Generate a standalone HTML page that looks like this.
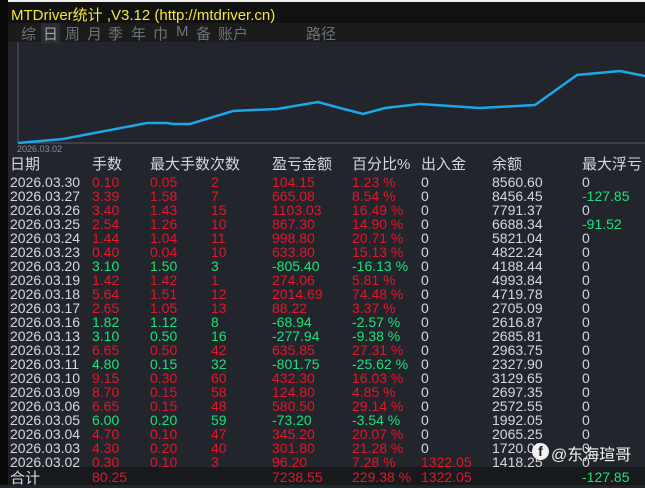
<!DOCTYPE html>
<html><head><meta charset="utf-8"><style>
body{margin:0;width:645px;height:485px;overflow:hidden;background:#22252b;font-family:"Liberation Sans","Noto Sans CJK SC",sans-serif;position:relative}
.a{position:absolute;white-space:nowrap}
#left{left:0;top:0;width:8px;height:485px;background:#0a0a0a}
#title{left:8px;top:0;width:637px;height:23px;background:#111;border-top:2px solid #eee;box-sizing:border-box}
#title span{position:absolute;left:3px;top:2px;color:#f5e63a;font-size:15px}
#tabs{left:8px;top:23px;width:637px;height:19px;background:#1b1b1b;color:#6e7278;font-size:15px}
.r{font-size:14px;line-height:14px}
.h{font-size:15px;line-height:16px;color:#d4d7e0;top:157px}
.w{color:#d4d7e0}.rd{color:#e0182a}.g{color:#1ee07a}
#tot{left:8px;top:467px;width:637px;height:18px;background:#18191c}
</style></head><body>
<div class="a" id="left"></div>
<div class="a" id="title"><span>MTDriver统计 ,V3.12 (http://mtdriver.cn)</span></div>
<div class="a" id="tabs">
<span class="a" style="left:13px;top:0">综</span>
<span class="a" style="left:33px;top:0;background:#2a2d33;color:#a0a4aa;padding:0 2px">日</span>
<span class="a" style="left:57px;top:0">周</span>
<span class="a" style="left:79px;top:0">月</span>
<span class="a" style="left:100px;top:0">季</span>
<span class="a" style="left:123px;top:0">年</span>
<span class="a" style="left:145px;top:0">巾</span>
<span class="a" style="left:168px;top:0">M</span>
<span class="a" style="left:188px;top:0">备</span>
<span class="a" style="left:210px;top:0">账户</span>
<span class="a" style="left:298px;top:0">路径</span>
</div>
<svg class="a" style="left:0;top:42px" width="645" height="110">
<line x1="18" y1="0" x2="18" y2="101" stroke="#555a62"/>
<line x1="18" y1="101" x2="645" y2="101" stroke="#555a62"/>
<polyline fill="none" stroke="#1aa8e8" stroke-width="2.5" points="18,101 63,97 147,81 167,81 173,82 190,82 233,69 253,68 277,67 318,60 340,66 363,72 385,66 420,62 480,66 535,63 577,33 620,29 645,34"/>
<text x="17" y="110" font-size="9" fill="#8a8e96" font-family="Liberation Sans">2026.03.02</text>
</svg>
<div class="a h" style="left:10px">日期</div>
<div class="a h" style="left:92px">手数</div>
<div class="a h" style="left:150px">最大手数次数</div>
<div class="a h" style="left:272px">盈亏金额</div>
<div class="a h" style="left:352px">百分比%</div>
<div class="a h" style="left:421px">出入金</div>
<div class="a h" style="left:492px">余额</div>
<div class="a h" style="left:582px">最大浮亏</div>
<div class="a" id="tot"></div>
<div id="rows"></div>
<script>
var d=[["2026.03.30","0.10","0.05","2","104.15","1.23 %","0","8560.60","0",0,0],
["2026.03.27","3.39","1.58","7","665.08","8.54 %","0","8456.45","-127.85",0,1],
["2026.03.26","3.40","1.43","15","1103.03","16.49 %","0","7791.37","0",0,0],
["2026.03.25","2.54","1.26","10","867.30","14.90 %","0","6688.34","-91.52",0,1],
["2026.03.24","1.44","1.04","11","998.80","20.71 %","0","5821.04","0",0,0],
["2026.03.23","0.40","0.04","10","633.80","15.13 %","0","4822.24","0",0,0],
["2026.03.20","3.10","1.50","3","-805.40","-16.13 %","0","4188.44","0",1,0],
["2026.03.19","1.42","1.42","1","274.06","5.81 %","0","4993.84","0",0,0],
["2026.03.18","5.64","1.51","12","2014.69","74.48 %","0","4719.78","0",0,0],
["2026.03.17","2.65","1.05","13","88.22","3.37 %","0","2705.09","0",0,0],
["2026.03.16","1.82","1.12","8","-68.94","-2.57 %","0","2616.87","0",1,0],
["2026.03.13","3.10","0.50","16","-277.94","-9.38 %","0","2685.81","0",1,0],
["2026.03.12","6.65","0.50","42","635.85","27.31 %","0","2963.75","0",0,0],
["2026.03.11","4.80","0.15","32","-801.75","-25.62 %","0","2327.90","0",1,0],
["2026.03.10","9.15","0.30","60","432.30","16.03 %","0","3129.65","0",0,0],
["2026.03.09","8.70","0.15","58","124.80","4.85 %","0","2697.35","0",0,0],
["2026.03.06","6.65","0.15","48","580.50","29.14 %","0","2572.55","0",0,0],
["2026.03.05","6.00","0.20","59","-73.20","-3.54 %","0","1992.05","0",1,0],
["2026.03.04","4.70","0.10","47","345.20","20.07 %","0","2065.25","0",0,0],
["2026.03.03","4.30","0.20","40","301.80","21.28 %","0","1720.05","0",0,0],
["2026.03.02","0.30","0.10","3","96.20","7.28 %","1322.05","1418.25","0",0,0]];
var xs=[10,92,150,211,272,352,421,492,582],h="";
for(var i=0;i<d.length;i++){var r=d[i],y=175+i*14,c=r[9]?"g":"rd";
for(var j=0;j<9;j++){var cl=j==0||j==7?"w":j==6?(r[6]=="0"?"w":"rd"):j==8?(r[10]?"g":"w"):c;
h+='<div class="a r '+cl+'" style="left:'+xs[j]+'px;top:'+y+'px">'+r[j]+'</div>';}}
h+='<div class="a w" style="left:10px;top:467px;font-size:15px">合计</div><div class="a r rd" style="left:92px;top:470px">80.25</div><div class="a r rd" style="left:272px;top:470px">7238.55</div><div class="a r rd" style="left:352px;top:470px">229.38 %</div><div class="a r rd" style="left:421px;top:470px">1322.05</div><div class="a r g" style="left:582px;top:470px">-127.85</div>';
document.getElementById("rows").innerHTML=h;
</script>
<div class="a" style="left:532px;top:443px;width:17px;height:17px;border-radius:50%;background:#f2f2f2;color:#222;font-size:14px;font-weight:bold;text-align:center;line-height:17px">f</div>
<div class="a" style="left:551px;top:441px;color:#f2f2f2;font-size:16px">@东海瑄哥</div>
</body></html>
